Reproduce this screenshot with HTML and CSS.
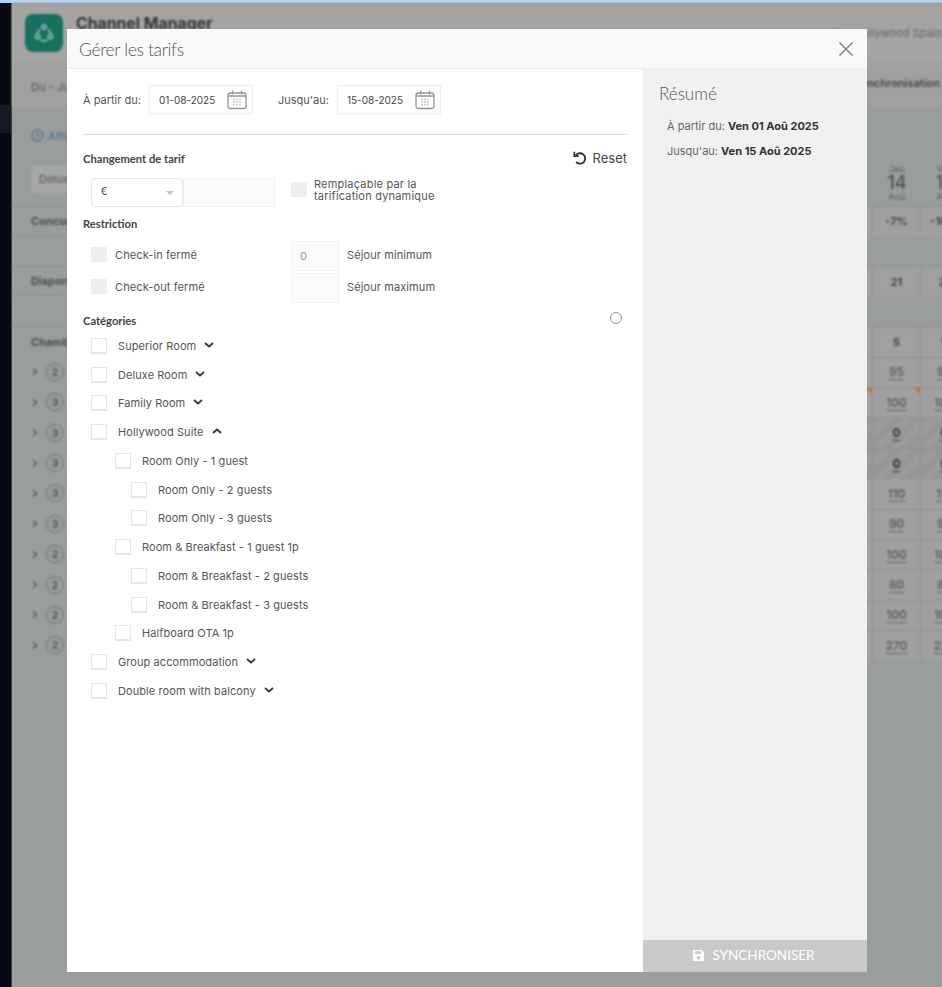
FILE: index.html
```html
<!DOCTYPE html>
<html lang="fr">
<head>
<meta charset="utf-8">
<title>Channel Manager</title>
<link rel="stylesheet" href="styles.css">
</head>
<body>
<div class="topline"></div>
<div class="page">
  <aside class="sidebar"><div class="side-active"></div></aside>
  <div class="main">
    <header class="app-head">
      <div class="logo">
        <svg width="22" height="22" viewBox="0 0 24 24" fill="none" stroke="#b5d6ce" stroke-width="1.400"><circle cx="12" cy="5.500" r="2.300"/><circle cx="5" cy="16" r="2.300"/><circle cx="19" cy="16" r="2.300"/><path d="M7.500 8.500a8 8 0 0 0-3 4.500M16.500 8.500a8 8 0 0 1 3 4.500M8 19.500a8 8 0 0 0 8 0"/></svg>
      </div>
      <div class="app-title">Channel Manager</div>
      <div class="hotel">The Hollywood Spain</div>
    </header>
    <div class="toolbar"><span class="range">Du - Juillet</span><span class="sync">Synchronisation</span></div>
    <div class="afficher">
      <svg width="13" height="13" viewBox="0 0 14 14" fill="none" stroke="#5f7690" stroke-width="1.600"><circle cx="7" cy="7" r="5.800"/><path d="M7 3.800V7l2 1.500"/></svg>
      <span>Afficher</span>
    </div>
    <div class="head-row">
      <div class="filter">Deluxe</div>
      <div class="day"></div>
      <div class="day"><small>Jeu</small><b>14</b><small>Aoû</small></div>
      <div class="day"><small>Ven</small><b>15</b><small>Aoû</small></div>
    </div>
    <div class="row row-a"><div class="label">Concurrence</div><div class="cell"></div><div class="cell strong">-7%</div><div class="cell strong">-10%</div></div>
    <div class="row row-b"><div class="label">Disponibilité</div><div class="cell"></div><div class="cell strong">21</div><div class="cell strong">21</div></div>
    <div class="row row-c"><div class="label">Chambres</div><div class="cell"></div><div class="cell strong">5</div><div class="cell strong">5</div></div>
    <div class="row"><div class="label"><i class="chev"></i><em>2</em></div><div class="cell"></div><div class="cell price">95</div><div class="cell price">95</div></div>
    <div class="row"><div class="label"><i class="chev"></i><em>3</em></div><div class="cell"><s></s></div><div class="cell price"><s></s>100</div><div class="cell price">100</div></div>
    <div class="row"><div class="label"><i class="chev"></i><em>3</em></div><div class="cell hatch"></div><div class="cell price zero hatch">0</div><div class="cell price zero hatch">0</div></div>
    <div class="row"><div class="label"><i class="chev"></i><em>3</em></div><div class="cell hatch"></div><div class="cell price zero hatch">0</div><div class="cell price zero hatch">0</div></div>
    <div class="row"><div class="label"><i class="chev"></i><em>3</em></div><div class="cell"></div><div class="cell price">110</div><div class="cell price">110</div></div>
    <div class="row"><div class="label"><i class="chev"></i><em>3</em></div><div class="cell"></div><div class="cell price">90</div><div class="cell price">90</div></div>
    <div class="row"><div class="label"><i class="chev"></i><em>2</em></div><div class="cell"></div><div class="cell price">100</div><div class="cell price">100</div></div>
    <div class="row"><div class="label"><i class="chev"></i><em>2</em></div><div class="cell"></div><div class="cell price">80</div><div class="cell price">80</div></div>
    <div class="row"><div class="label"><i class="chev"></i><em>2</em></div><div class="cell"></div><div class="cell price">100</div><div class="cell price">100</div></div>
    <div class="row"><div class="label"><i class="chev"></i><em>2</em></div><div class="cell"></div><div class="cell price">270</div><div class="cell price">270</div></div>
  </div>
</div>

<section class="modal">
  <header class="modal-head">
    <h1>Gérer les tarifs</h1>
    <svg class="close" width="16" height="16" viewBox="0 0 16 16" fill="none" stroke="#7a7a7a" stroke-width="1.400"><path d="M1.500 1.500l13 13M14.500 1.500l-13 13"/></svg>
  </header>
  <div class="modal-body">
    <div class="form">
      <div class="dates">
        <label>À partir du:</label>
        <div class="date-box"><span>01-08-2025</span>
          <svg class="cal" width="20" height="20" viewBox="0 0 20 20" fill="none" stroke="#959595" stroke-width="1.300"><rect x="1" y="3" width="18" height="15.500" rx="2.500"/><path d="M5.500 .5v4M14.500 .5v4M1 6h18"/><path d="M6.500 9.500h1M9.500 9.500h1M12.500 9.500h1M6.500 12h1M9.500 12h1M12.500 12h1M6.500 14.500h1M9.500 14.500h1M12.500 14.500h1" stroke-width="1.300"/></svg>
        </div>
        <label class="to">Jusqu'au:</label>
        <div class="date-box"><span>15-08-2025</span>
          <svg class="cal" width="20" height="20" viewBox="0 0 20 20" fill="none" stroke="#959595" stroke-width="1.300"><rect x="1" y="3" width="18" height="15.500" rx="2.500"/><path d="M5.500 .5v4M14.500 .5v4M1 6h18"/><path d="M6.500 9.500h1M9.500 9.500h1M12.500 9.500h1M6.500 12h1M9.500 12h1M12.500 12h1M6.500 14.500h1M9.500 14.500h1M12.500 14.500h1" stroke-width="1.300"/></svg>
        </div>
      </div>
      <hr class="sep">
      <div class="title-row">
        <h2>Changement de tarif</h2>
        <div class="reset">
          <svg width="14" height="14" viewBox="0 0 14 14" fill="none" stroke="#333" stroke-width="1.900"><path d="M2.800 4.400A5.200 5.200 0 1 1 3.200 11"/><path d="M1.300 .8v4.400h4.400" stroke-width="1.700"/></svg>
          <span>Reset</span>
        </div>
      </div>
      <div class="tariff">
        <div class="select"><span>€</span><i class="caret"></i></div>
        <div class="input wide"></div>
        <div class="check-fill dyn"></div>
        <div class="dyn-text">Remplaçable par la<br>tarification dynamique</div>
      </div>
      <h2 class="restr-title">Restriction</h2>
      <div class="restr">
        <div class="restr-line"><div class="check-fill"></div><span>Check-in fermé</span></div>
        <div class="restr-line num"><div class="input small">0</div><span>Séjour minimum</span></div>
        <div class="restr-line"><div class="check-fill"></div><span>Check-out fermé</span></div>
        <div class="restr-line num"><div class="input small"></div><span>Séjour maximum</span></div>
      </div>
      <div class="cat-title"><h2>Catégories</h2><i class="ring"></i></div>
      <ul class="cats">
        <li><i class="box"></i><span>Superior Room</span><svg class="chevron" viewBox="0 0 10 6"><path d="M1 1l4 3.500L9 1"/></svg></li>
        <li><i class="box"></i><span>Deluxe Room</span><svg class="chevron" viewBox="0 0 10 6"><path d="M1 1l4 3.500L9 1"/></svg></li>
        <li><i class="box"></i><span>Family Room</span><svg class="chevron" viewBox="0 0 10 6"><path d="M1 1l4 3.500L9 1"/></svg></li>
        <li><i class="box"></i><span>Hollywood Suite</span><svg class="chevron" viewBox="0 0 10 6"><path d="M1 5l4-3.500L9 5"/></svg></li>
        <li class="lv2"><i class="box"></i><span>Room Only - 1 guest</span></li>
        <li class="lv3"><i class="box"></i><span>Room Only - 2 guests</span></li>
        <li class="lv3"><i class="box"></i><span>Room Only - 3 guests</span></li>
        <li class="lv2"><i class="box"></i><span>Room &amp; Breakfast - 1 guest 1p</span></li>
        <li class="lv3"><i class="box"></i><span>Room &amp; Breakfast - 2 guests</span></li>
        <li class="lv3"><i class="box"></i><span>Room &amp; Breakfast - 3 guests</span></li>
        <li class="lv2"><i class="box"></i><span>Halfboard OTA 1p</span></li>
        <li><i class="box"></i><span>Group accommodation</span><svg class="chevron" viewBox="0 0 10 6"><path d="M1 1l4 3.500L9 1"/></svg></li>
        <li><i class="box"></i><span>Double room with balcony</span><svg class="chevron" viewBox="0 0 10 6"><path d="M1 1l4 3.500L9 1"/></svg></li>
      </ul>
    </div>
    <aside class="summary">
      <div class="sum-body">
        <h3>Résumé</h3>
        <p>À partir du: <b>Ven 01 Aoû 2025</b></p>
        <p>Jusqu'au: <b>Ven 15 Aoû 2025</b></p>
      </div>
      <button class="sync-btn">
        <svg width="13" height="13" viewBox="0 0 14 14" fill="#fff"><path d="M1.500 1h9L13 3.500v8a1.500 1.500 0 0 1-1.500 1.500h-9.500A1 1 0 0 1 1 12V1.500A.5.500 0 0 1 1.500 1zM3 2.500V5.500h7V2.500zM7 7.500a2 2 0 1 0 0 4 2 2 0 0 0 0-4z" fill-rule="evenodd"/></svg>
        <span>SYNCHRONISER</span>
      </button>
    </aside>
  </div>
</section>
</body>
</html>
```
FILE: styles.css
```css
* { box-sizing: border-box; }
html, body { margin: 0; height: 100%; overflow: hidden; }
body { background: #9a9d9d; font-family: "Inter", "Liberation Sans", sans-serif; }

.topline { height: 3px; background: #b2d2f4; }
.page { display: flex; height: 984px; width: 969px; }

.sidebar { flex: 0 0 12px; background: #070a12; border-right: 1px solid #3b3e42; display: flex; flex-direction: column; padding-top: 102px; }
.side-active { height: 28px; background: #141a22; }

.main { flex: 1; display: flex; flex-direction: column; filter: blur(1.100px); color: #4a4d4d; min-width: 0; }
.app-head { height: 59px; background: #a4a4a4; display: flex; align-items: flex-start; flex: none; }
.logo { width: 38px; height: 38px; margin: 11px 0 0 13px; background: #17705f; border-radius: 8px; display: flex; align-items: center; justify-content: center; }
.app-title { margin: 11px 0 0 13px; font-size: 15.800px; font-weight: 700; line-height: 20px; color: #333; }
.hotel { margin: 22px 0 0 auto; padding-right: 27px; font-size: 11px; line-height: 16px; color: #666; }

.toolbar { height: 44px; flex: none; background: #a0a0a0; display: flex; justify-content: space-between; align-items: flex-start; padding: 0 29px 0 19px; font-size: 11px; line-height: 16px; color: #555; }
.range { margin-top: 17px; }
.sync { margin-top: 13px; font-weight: 600; color: #444; }

.afficher { height: 59.500px; flex: none; display: flex; align-items: flex-start; gap: 4px; padding: 23px 0 0 19px; font-size: 11px; font-weight: 600; color: #5f7690; }

.head-row { height: 40px; display: grid; grid-template-columns: 1fr 48px 48px 48px; flex: none; }
.filter { width: 120px; height: 27px; margin-left: 19px; background: #a5a6a6; border-radius: 3px; padding: 6px 8px; font-size: 11px; color: #555; }
.day { display: flex; flex-direction: column; align-items: center; margin-top: -2px; font-size: 9px; line-height: 10px; color: #5a5d5d; }
.day b { font-size: 18px; line-height: 18px; font-weight: 400; color: #3f4242; }
.day small { font-size: 9px; }

.row { display: grid; grid-template-columns: 1fr 48px 48px 48px; height: 30.400px; flex: none; }
.row-a { margin-bottom: 30px; }
.row-b { margin-bottom: 30px; }
.label { display: flex; align-items: center; padding-left: 19px; font-size: 11px; font-weight: 700; color: #4a4d4d; }
.row-a .label, .row-b .label { border-top: 1px solid #8e9191; border-bottom: 1px solid #8e9191; }
.row-c .label { border-top: 1px solid #8e9191; }

.chev { width: 5px; height: 5px; border-top: 1.700px solid #444; border-right: 1.700px solid #444; transform: rotate(45deg); margin-right: 10px; }
.label em { width: 18px; height: 18px; flex: none; border: 1.500px solid #6f7272; border-radius: 50%; font-style: normal; font-weight: 700; font-size: 11px; display: flex; align-items: center; justify-content: center; color: #555858; }

.cell { background: #a0a0a0; border: 1px solid #8f9191; border-width: 1px 1px 0 0; display: flex; align-items: center; justify-content: center; font-size: 11px; position: relative; }
.cell.strong { font-weight: 700; color: #3f4242; }
.cell.price { font-weight: 700; color: #666868; font-size: 11.500px; text-decoration: underline; text-underline-offset: 3px; }
.cell.price.zero { color: #333535; }
.hatch { background: repeating-linear-gradient(135deg, #959696 0 7px, #9b9b9b 7px 14px); }
.cell s { position: absolute; top: 0; right: 0; width: 0; height: 0; border-top: 6px solid #c07a2c; border-left: 6px solid transparent; }

.modal { position: absolute; left: 67px; top: 29px; width: 800px; height: 943px; background: #fff; display: flex; flex-direction: column; }
.modal-head { height: 40px; flex: none; background: #f9f9f9; border-bottom: 1px solid #eeeeee; display: flex; align-items: center; justify-content: space-between; padding: 0 13px 0 12px; }
.modal-head h1 { margin: 1px 0 0; font-family: "Lato", sans-serif; font-weight: 300; font-size: 17.500px; letter-spacing: -.35px; color: #555; }
.modal-body { flex: 1; display: flex; min-height: 0; }

.form { flex: 0 0 576px; padding: 16px 16px 0; font-size: 11px; color: #555; }
.dates { display: flex; align-items: center; height: 29px; }
.dates label { margin-right: 8px; }
.dates .to { margin: 0 8px 0 25px; }
.date-box { width: 104px; height: 29px; border: 1px solid #ececec; display: flex; align-items: center; justify-content: space-between; padding: 0 5px 0 9px; font-size: 10px; color: #444; }
.sep { border: 0; border-top: 1px solid #dcdcdc; margin: 20px 0 0; }

.title-row { display: flex; justify-content: space-between; align-items: center; margin-top: 16px; height: 16px; }
h2 { margin: 0; font-family: "Lato", sans-serif; font-weight: 700; font-size: 11.200px; line-height: 16px; color: #444; }
.reset { display: flex; align-items: center; gap: 6px; margin-top: -2px; font-size: 13px; color: #444; }

.tariff { display: flex; margin: 11px 0 0 8px; height: 29px; }
.select { width: 92px; border: 1px solid #e8e8e8; border-radius: 4px; display: flex; align-items: center; justify-content: space-between; padding: 0 8px 4px 9px; font-size: 11px; font-family: "Lato", sans-serif; }
.caret { width: 0; height: 0; border: 4px solid transparent; border-top: 4px solid #c4c4c4; border-bottom: 0; margin-top: 4px; }
.input { background: #fbfbfb; border: 1px solid #f1f1f1; color: #999; }
.wide { width: 92px; }
.dyn { margin: 4px 0 0 16px; }
.dyn-text { margin: 0 0 0 7px; line-height: 12px; letter-spacing: .2px; }
.check-fill { width: 16px; height: 15px; background: #eeeeee; flex: none; margin-bottom: 4px; }

.restr-title { margin-top: 9px; }
.restr { display: grid; grid-template-columns: 200px 1fr; margin: 9px 0 0 8px; row-gap: 2px; }
.restr-line { display: flex; align-items: center; height: 30px; gap: 8px; letter-spacing: .1px; }
.restr-line span { padding-bottom: 2px; }
.input.small { width: 48px; height: 30px; display: flex; align-items: center; padding-left: 8px; }

.cat-title { display: flex; justify-content: space-between; align-items: center; margin-top: 10px; padding-right: 5px; }
.ring { width: 12px; height: 12px; border: 1px solid #999; border-radius: 50%; margin-top: -6px; }

.cats { list-style: none; margin: 2.400px 0 0 8px; padding: 0; }
.cats li { height: 28.750px; display: flex; align-items: center; letter-spacing: .08px; }
.cats li.lv2 { padding-left: 24px; }
.cats li.lv3 { padding-left: 40px; }
.box { width: 16px; height: 16px; flex: none; background: #fff; border: 1px solid #e6e6e6; border-bottom-width: 2px; margin-right: 11px; }
.chevron { width: 10px; height: 6px; margin: -2px 0 0 8px; fill: none; stroke: #333; stroke-width: 1.700; }

.summary { flex: 1; background: #f1f1f1; display: flex; flex-direction: column; }
.sum-body { flex: 1; padding: 14px 16px; font-size: 11px; color: #666; }
.sum-body h3 { margin: 0 0 15px; font-family: "Lato", sans-serif; font-weight: 300; font-size: 17px; line-height: 22px; color: #555; }
.sum-body p { margin: 0 0 12px 8px; line-height: 13px; }
.sum-body b { color: #333; font-weight: 700; }
.sync-btn { height: 32px; flex: none; width: 100%; border: 0; padding: 0 3px 2px 0; background: #c9c9c9; color: #fff; font-family: "Lato", sans-serif; font-size: 13.500px; display: flex; align-items: center; justify-content: center; gap: 7px; }
```
